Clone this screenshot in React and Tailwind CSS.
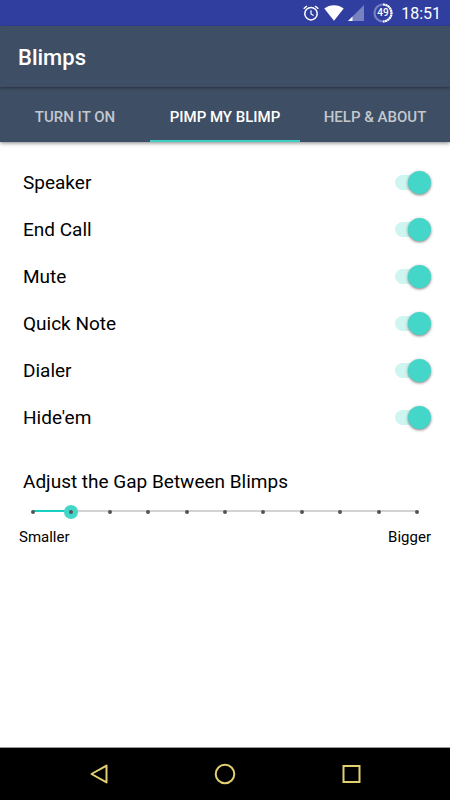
import { useState } from "react";

const tabs = ["Turn it on", "Pimp my Blimp", "Help & About"];

const blimps = [
  { id: "speaker", label: "Speaker" },
  { id: "end-call", label: "End Call" },
  { id: "mute", label: "Mute" },
  { id: "quick-note", label: "Quick Note" },
  { id: "dialer", label: "Dialer" },
  { id: "hide-em", label: "Hide'em" },
];

const GAP_STEPS = 10;

function StatusBar() {
  return (
    <div className="flex h-[26px] items-center justify-end bg-[#303f9f] pr-[9px] text-white">
      <svg className="mr-[5px] h-4 w-4" viewBox="0 0 16 16" fill="none" stroke="currentColor">
        <circle cx="8" cy="8.7" r="6.2" strokeWidth="1.5" />
        <path d="M8 5.2v3.8l2.6 1.6" strokeWidth="1.2" />
        <path d="M0.7 3.7l3.2-2.7M15.3 3.7l-3.2-2.7" strokeWidth="1.5" />
      </svg>
      <svg className="mr-1 h-4 w-5" viewBox="0 0 20 16" fill="currentColor">
        <path d="M0.3 3.6C3 1.5 6.3 0.3 10 0.3s7 1.2 9.7 3.3L10 15.8z" />
      </svg>
      <svg className="mr-[9px] h-4 w-4" viewBox="0 0 16 16" fill="currentColor">
        <path d="M0 16L16 0v16z" opacity="0.35" />
        <path d="M0 16l4.5-4.5V16z" />
      </svg>
      <svg className="mr-2 h-5 w-5" viewBox="0 0 20 20" fill="none" stroke="currentColor">
        <circle cx="10" cy="10" r="8.5" strokeWidth="2.2" opacity="0.35" />
        <path d="M10 1.5a8.5 8.5 0 0 1 0 17" strokeWidth="2.2" strokeDasharray="2 0.5" />
        <text
          x="10"
          y="13.4"
          fill="currentColor"
          stroke="none"
          textAnchor="middle"
          className="text-[10px] font-medium"
        >
          49
        </text>
      </svg>
      <span className="pt-0.5 text-[16px] leading-5">18:51</span>
    </div>
  );
}

function Tabs({ active, onChange }) {
  return (
    <nav className="relative grid h-[55px] grid-cols-3 bg-[#3e4e64] shadow-[0_1px_4px_rgba(0,0,0,0.5)]">
      {tabs.map((tab, i) => (
        <button
          key={tab}
          type="button"
          onClick={() => onChange(i)}
          className={
            i === active
              ? "cursor-pointer border-b-2 border-[#3fcfc2] pt-2 text-[15px] font-medium whitespace-nowrap text-white uppercase"
              : "cursor-pointer border-b-2 border-transparent pt-2 text-[15px] font-medium whitespace-nowrap text-[#c3c8cf] uppercase"
          }
        >
          {tab}
        </button>
      ))}
    </nav>
  );
}

function SwitchRow({ id, label }) {
  const [on, setOn] = useState(true);
  return (
    <div className="flex h-[47px] items-center justify-between">
      <label htmlFor={id} className="text-[19px] leading-6">
        {label}
      </label>
      <input
        id={id}
        type="checkbox"
        role="switch"
        checked={on}
        onChange={() => setOn(!on)}
        className="relative mr-1 mb-px h-[15px] w-8 cursor-pointer appearance-none rounded-full bg-gray-300 before:absolute before:-top-1 before:-left-1 before:size-[23px] before:rounded-full before:bg-gray-100 before:shadow-[0_1px_3px_rgba(0,0,0,0.5)] checked:bg-[#cff5f1] checked:before:left-[13px] checked:before:bg-[#45d6ca]"
      />
    </div>
  );
}

function GapSlider() {
  const [gap, setGap] = useState(1);
  return (
    <section className="pt-[29px]">
      <label htmlFor="gap" className="block px-[23px] text-[19px] leading-6">
        Adjust the Gap Between Blimps
      </label>
      <div className="relative mx-[26px] mt-2.5 h-[15px]">
        {/* track runs between the centres of the first and last stops */}
        <div className="absolute inset-x-[7px] top-[6px] h-0.5 bg-[#d3d3d3]">
          <div className="h-full bg-[#17d0c4]" style={{ width: `${(gap / GAP_STEPS) * 100}%` }} />
        </div>
        <input
          id="gap"
          type="range"
          min="0"
          max={GAP_STEPS}
          value={gap}
          onChange={(e) => setGap(Number(e.target.value))}
          className="absolute inset-0 m-0 h-full w-full cursor-pointer appearance-none bg-transparent [&::-webkit-slider-thumb]:size-[14px] [&::-webkit-slider-thumb]:appearance-none [&::-webkit-slider-thumb]:rounded-full [&::-webkit-slider-thumb]:bg-[#45d6ca]"
        />
        <div className="pointer-events-none absolute inset-0 flex items-center justify-between px-[5px]">
          {Array.from({ length: GAP_STEPS + 1 }, (_, i) => (
            <span key={i} className="size-1 rounded-full bg-[#555]" />
          ))}
        </div>
      </div>
      <div className="mt-2 flex justify-between px-[19px] text-[15px] leading-5">
        <span>Smaller</span>
        <span>Bigger</span>
      </div>
    </section>
  );
}

function NavBar() {
  return (
    <footer className="flex h-[53px] items-center justify-center gap-[102px] border-t border-[#999] bg-black text-[#e2cf70]">
      <button type="button" aria-label="Back" className="cursor-pointer">
        <svg className="size-6" viewBox="0 0 24 24" fill="none" stroke="currentColor" strokeWidth="2">
          <path d="M19.5 3.6v16.8L4.5 12z" strokeLinejoin="round" />
        </svg>
      </button>
      <button type="button" aria-label="Home" className="cursor-pointer">
        <svg className="size-6" viewBox="0 0 24 24" fill="none" stroke="currentColor" strokeWidth="2">
          <circle cx="12" cy="12" r="9.3" />
        </svg>
      </button>
      <button type="button" aria-label="Recent apps" className="cursor-pointer">
        <svg className="size-6" viewBox="0 0 24 24" fill="none" stroke="currentColor" strokeWidth="2">
          <rect x="4.5" y="4" width="16" height="16" />
        </svg>
      </button>
    </footer>
  );
}

export default function App() {
  const [active, setActive] = useState(1);
  return (
    <div className="flex min-h-screen flex-col bg-white font-[Roboto,sans-serif] text-black">
      <StatusBar />
      <header className="relative z-10 flex h-[61px] items-center bg-[#3e4e64] px-[18px] pt-0.5 shadow-[0_1px_3px_rgba(0,0,0,0.4)]">
        <h1 className="text-[22px] leading-7 font-medium text-white">Blimps</h1>
      </header>
      <Tabs active={active} onChange={setActive} />
      <main className="flex-1">
        <div className="pt-[17px] pr-[19px] pl-[23px]">
          {blimps.map((blimp) => (
            <SwitchRow key={blimp.id} id={blimp.id} label={blimp.label} />
          ))}
        </div>
        <GapSlider />
      </main>
      <NavBar />
    </div>
  );
}
